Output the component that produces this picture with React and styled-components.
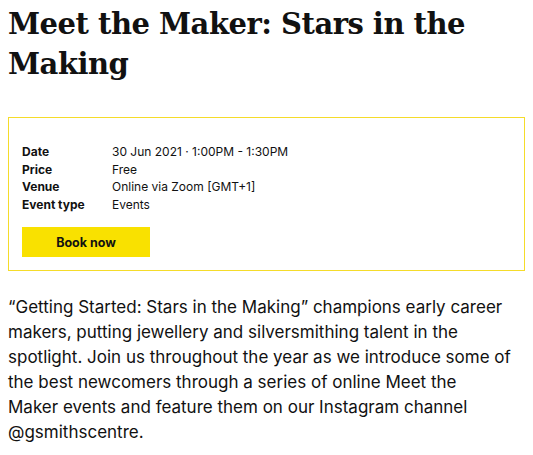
import React from 'react';
import styled, { createGlobalStyle } from 'styled-components';

const GlobalStyle = createGlobalStyle`
  body {
    margin: 0;
    background: #ffffff;
    color: #111111;
    font-family: Inter, "Liberation Sans", sans-serif;
  }
`;

const Page = styled.div`
  padding: 0 8px;
`;

const Title = styled.h1`
  margin: 4px 0 33px;
  font-family: "DejaVu Serif", serif;
  font-weight: 700;
  font-size: 29px;
  line-height: 40px;
  letter-spacing: -0.5px;
`;

const InfoBox = styled.section`
  border: 1px solid #f5dc2a;
  padding: 25px 13px 13px;
`;

const InfoList = styled.dl`
  display: grid;
  grid-template-columns: 90px 1fr;
  margin: 0 0 14px;
  font-size: 12px;
  line-height: 17.5px;
`;

const Label = styled.dt`
  font-weight: 700;
`;

const Value = styled.dd`
  margin: 0;
`;

const BookButton = styled.button`
  width: 128px;
  height: 30px;
  border: none;
  background: #f9e100;
  color: #111111;
  font-family: Inter, "Liberation Sans", sans-serif;
  font-weight: 700;
  font-size: 12.5px;
  cursor: pointer;
`;

const Intro = styled.p`
  max-width: 503px;
  margin: 24px 0 0;
  font-size: 17px;
  line-height: 25px;
`;

const details = [
  { label: 'Date', value: '30 Jun 2021 · 1:00PM - 1:30PM' },
  { label: 'Price', value: 'Free' },
  { label: 'Venue', value: 'Online via Zoom [GMT+1]' },
  { label: 'Event type', value: 'Events' },
];

export default function App() {
  return (
    <Page>
      <GlobalStyle />
      <Title>Meet the Maker: Stars in the Making</Title>

      <InfoBox>
        <InfoList>
          {details.map((d) => (
            <React.Fragment key={d.label}>
              <Label>{d.label}</Label>
              <Value>{d.value}</Value>
            </React.Fragment>
          ))}
        </InfoList>
        <BookButton>Book now</BookButton>
      </InfoBox>

      <Intro>
        “Getting Started: Stars in the Making” champions early career makers, putting
        jewellery and silversmithing talent in the spotlight. Join us throughout the year
        as we introduce some of the best newcomers through a series of online Meet the
        Maker events and feature them on our Instagram channel @gsmithscentre.
      </Intro>
    </Page>
  );
}
